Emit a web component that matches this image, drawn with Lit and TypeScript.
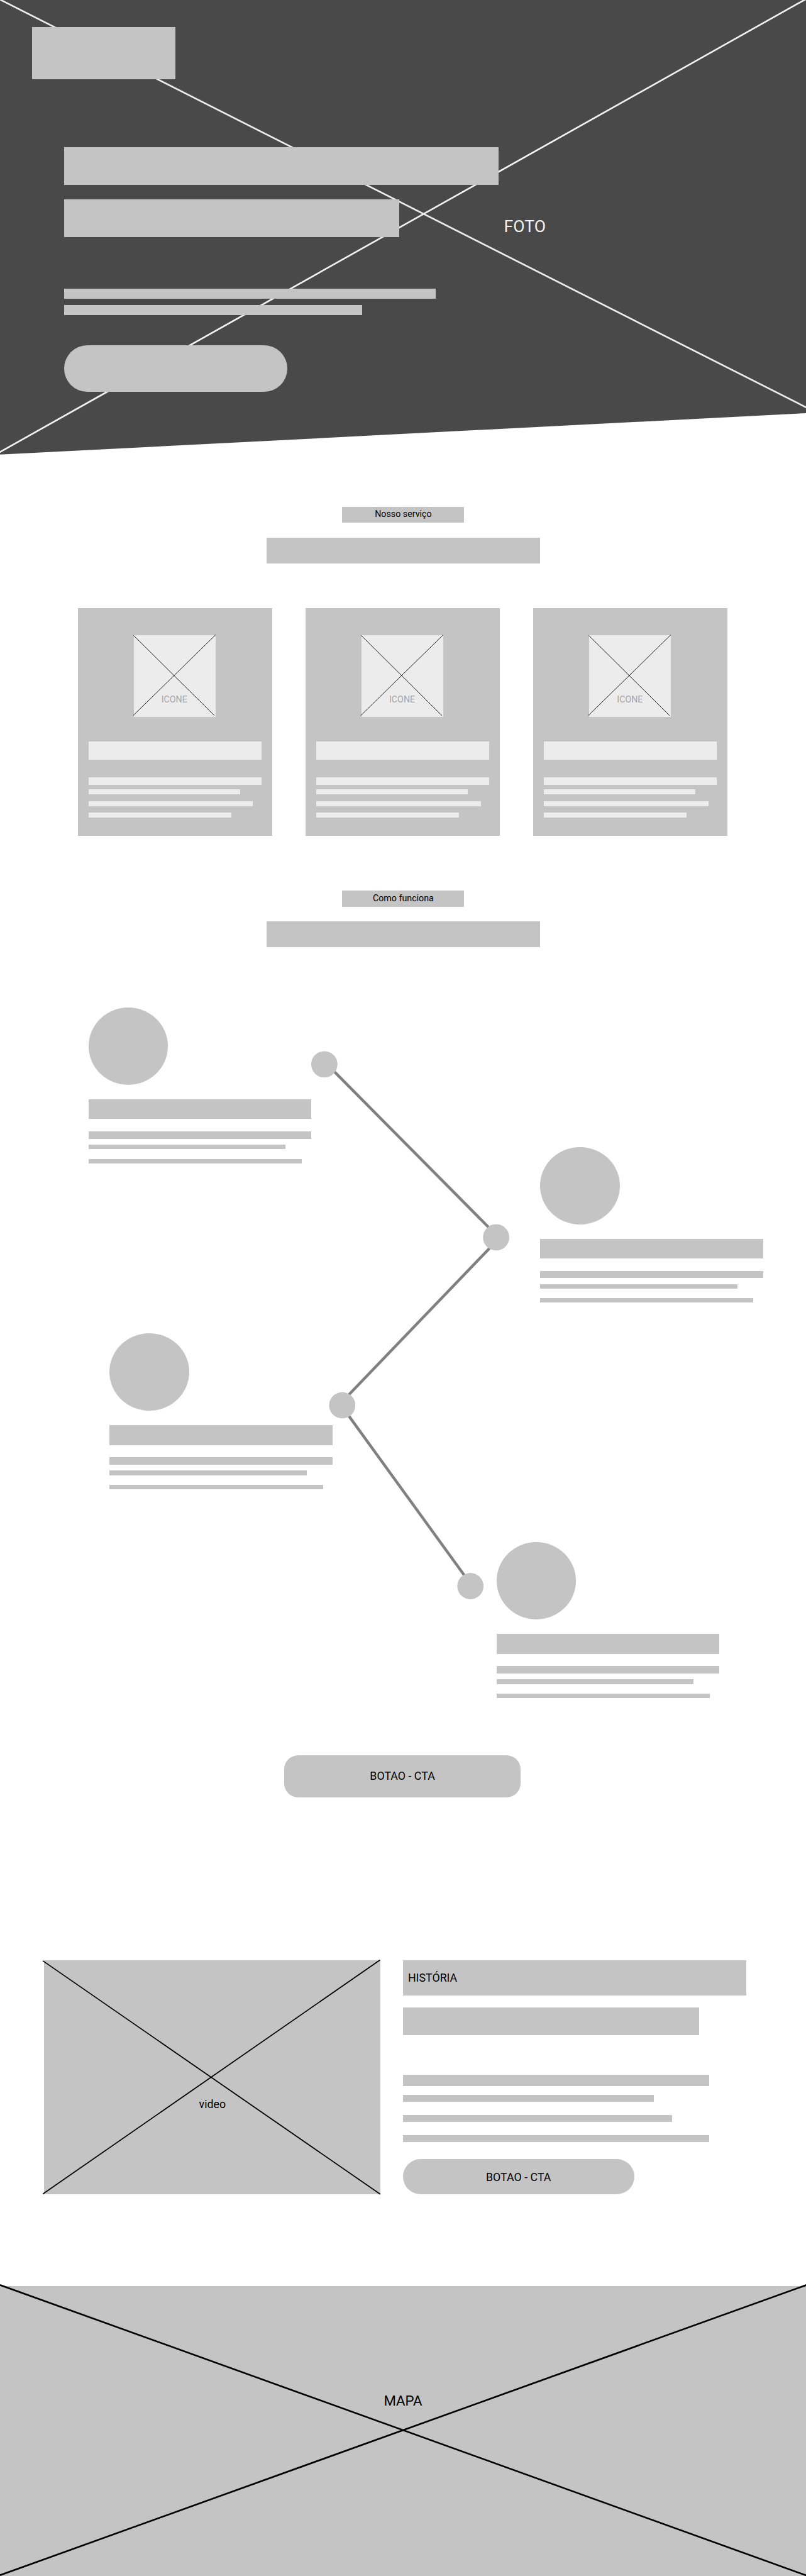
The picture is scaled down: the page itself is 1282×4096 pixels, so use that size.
import { LitElement, html, css, svg } from "lit";
import { customElement, property } from "lit/decorators.js";

interface Bar {
  w: number;
  h: number;
  gap: number;
}

/* Stack of placeholder bars; gap is the space above each bar. */
const bars = (items: Bar[]) =>
  items.map(
    (b) => html`<div class="bar" style="width:${b.w}px;height:${b.h}px;margin-top:${b.gap}px"></div>`
  );

const cross = (lines: number[][]) =>
  lines.map(([x1, y1, x2, y2]) => svg`<line x1=${x1} y1=${y1} x2=${x2} y2=${y2}></line>`);

const barStyles = css`
  .bar {
    background: var(--bar, #c4c4c4);
    flex: none;
  }
`;

@customElement("service-card")
export class ServiceCard extends LitElement {
  static styles = [
    barStyles,
    css`
      :host {
        --bar: #ececec;
        display: block;
        box-sizing: border-box;
        width: 347px;
        height: 407px;
        padding: 49px 19px 0;
        background: #c4c4c4;
      }
      .icon {
        position: relative;
        display: flex;
        align-items: flex-end;
        justify-content: center;
        box-sizing: border-box;
        width: 146px;
        height: 146px;
        margin: 0 auto 43px 81px;
        padding: 0 1px 22px 0;
        background: #ececec;
        color: #a6a6a6;
        font-size: 16px;
        line-height: 19px;
      }
      .icon svg {
        position: absolute;
        left: 0;
        top: 0;
        overflow: visible;
        stroke: #000;
        stroke-width: 1;
      }
    `,
  ];

  render() {
    return html`
      <div class="icon">
        <svg width="146" height="146" viewBox="0 0 146 146">
          ${cross([
            [-0.6, 0.4, 143.8, 143.6],
            [-1.4, 143.6, 146, -0.6],
          ])}
        </svg>
        <span>ICONE</span>
      </div>
      ${bars([
        { w: 309, h: 33, gap: 0 },
        { w: 309, h: 13, gap: 32 },
        { w: 271, h: 9, gap: 8 },
        { w: 294, h: 9, gap: 12 },
        { w: 255, h: 8, gap: 12 },
      ])}
    `;
  }
}

@customElement("step-item")
export class StepItem extends LitElement {
  static styles = [
    barStyles,
    css`
      :host {
        display: block;
        width: 398px;
        height: 278px;
      }
      .disc {
        width: 142px;
        height: 138px;
        border-radius: 50%;
        background: #c4c4c4;
      }
    `,
  ];

  render() {
    return html`
      <div class="disc"></div>
      ${bars([
        { w: 398, h: 35, gap: 26 },
        { w: 398, h: 13, gap: 22 },
        { w: 352, h: 8, gap: 11 },
        { w: 381, h: 8, gap: 17 },
      ])}
    `;
  }
}

@customElement("section-heading")
export class SectionHeading extends LitElement {
  @property() label = "";

  static styles = css`
    :host {
      display: flex;
      flex-direction: column;
      align-items: center;
      gap: 26px;
      height: 101px;
      padding-left: 0.8px;
    }
    .label {
      width: 218px;
      height: 29px;
      background: #c4c4c4;
      color: #000;
      font-size: 16px;
      line-height: var(--label-line, 25px);
      text-align: center;
    }
    .title {
      width: 489px;
      height: 46px;
      background: #c4c4c4;
    }
  `;

  render() {
    return html`<div class="label">${this.label}</div>
      <div class="title"></div>`;
  }
}

@customElement("app-root")
export class AppRoot extends LitElement {
  static styles = [
    barStyles,
    css`
      :host {
        display: block;
        overflow: hidden;
        background: #fff;
        font-family: Roboto, "Liberation Sans", sans-serif;
        color: #000;
      }
      .page {
        zoom: 0.8902;
        display: flex;
        flex-direction: column;
        width: 1440.2px;
      }
      svg {
        display: block;
      }
      .hero {
        position: relative;
        box-sizing: border-box;
        height: 812px;
        padding: 48px 0 0 57px;
      }
      .backdrop {
        position: absolute;
        left: 0;
        top: 0;
      }
      .logo {
        position: relative;
        width: 256px;
        height: 93px;
        background: #c4c4c4;
      }
      .pitch {
        position: relative;
        padding-left: 58px;
        margin-top: 122px;
      }
      .pill {
        width: 398px;
        height: 83px;
        margin-top: 54px;
        border-radius: 42px;
        background: #c4c4c4;
      }
      .photo-label {
        position: absolute;
        left: 900.3px;
        top: 388px;
        font-size: 30px;
        line-height: 34px;
        color: #f2f2f2;
      }
      .services {
        padding-top: 93px;
      }
      .cards {
        display: flex;
        gap: 60px;
        padding: 80px 0 0 139px;
      }
      .how {
        --label-line: 29px;
        padding-top: 98px;
      }
      .steps {
        position: relative;
        display: flex;
        justify-content: space-between;
        height: 1233px;
        margin-top: 108px;
        padding: 0 77px 0 158px;
      }
      .steps .path {
        position: absolute;
        left: 0;
        top: 0;
      }
      .col {
        display: flex;
        flex-direction: column;
      }
      .left {
        gap: 304px;
      }
      .left .second {
        margin-left: 38px;
      }
      .right {
        align-items: flex-end;
        gap: 428px;
        padding-top: 249px;
      }
      .right .second {
        margin-right: 78px;
      }
      .button {
        display: flex;
        align-items: center;
        justify-content: center;
        box-sizing: border-box;
        background: #c4c4c4;
        font-size: 20px;
        line-height: 24px;
      }
      .main-cta {
        width: 422px;
        height: 76px;
        margin: 102px 0 0 508px;
        border-radius: 25px;
        padding-bottom: 2px;
      }
      .about {
        display: flex;
        gap: 40px;
        margin-top: 290px;
        padding-left: 79px;
      }
      .video {
        position: relative;
        box-sizing: border-box;
        width: 601px;
        height: 419px;
        padding-top: 246px;
        background: #c4c4c4;
        font-size: 20px;
        line-height: 24px;
        text-align: center;
      }
      .video svg {
        position: absolute;
        left: 0;
        top: 0;
        overflow: visible;
        stroke: #000;
        stroke-width: 2;
      }
      .history {
        box-sizing: border-box;
        width: 614px;
        height: 63px;
        padding-left: 9px;
        background: #c4c4c4;
        font-size: 20px;
        line-height: 62px;
      }
      .about-cta {
        width: 413px;
        height: 63px;
        margin-top: 31px;
        border-radius: 32px;
      }
      .map {
        position: relative;
        box-sizing: border-box;
        height: 517.4px;
        margin-top: 164px;
        padding-top: 189.5px;
        background: #c4c4c4;
        font-size: 25px;
        line-height: 30px;
        text-align: center;
      }
      .map svg {
        position: absolute;
        left: 0;
        top: 0;
        overflow: visible;
        stroke: #000;
        stroke-width: 3;
      }
    `,
  ];

  render() {
    return html`
      <main class="page">
        <section class="hero">
          <svg class="backdrop" width="1441" height="813" viewBox="0 0 1441 813">
            <polygon points="0,0 1441,0 1441,738 0,812" fill="#494949"></polygon>
            <line x1="0" y1="-0.8" x2="1441" y2="728" stroke="#ececec" stroke-width="3"></line>
            <line x1="-2" y1="808.5" x2="1441" y2="-2.2" stroke="#f2f2f2" stroke-width="3"></line>
          </svg>
          <div class="logo"></div>
          <div class="pitch">
            ${bars([
              { w: 776, h: 67, gap: 0 },
              { w: 598, h: 67, gap: 26 },
              { w: 663, h: 18, gap: 93 },
              { w: 532, h: 18, gap: 11 },
            ])}
            <div class="pill"></div>
          </div>
          <span class="photo-label">FOTO</span>
        </section>

        <section class="services">
          <section-heading label="Nosso serviço"></section-heading>
          <div class="cards">
            <service-card></service-card>
            <service-card></service-card>
            <service-card></service-card>
          </div>
        </section>

        <section class="how">
          <section-heading label="Como funciona"></section-heading>
          <div class="steps">
            <svg class="path" width="1440" height="1233" viewBox="0 1800 1440 1233">
              <g stroke="#808080" stroke-width="5">
                ${cross([
                  [590, 1907.2, 875, 2194.6],
                  [880, 2224.5, 620, 2495],
                  [620, 2525, 832, 2817.5],
                ])}
              </g>
              <g fill="#c4c4c4">
                <circle cx="579.5" cy="1901.5" r="23.5"></circle>
                <circle cx="886.5" cy="2210.5" r="23.5"></circle>
                <circle cx="611.5" cy="2510.5" r="23.5"></circle>
                <circle cx="840.5" cy="2833.5" r="23.5"></circle>
              </g>
            </svg>
            <div class="col left">
              <step-item></step-item>
              <step-item class="second"></step-item>
            </div>
            <div class="col right">
              <step-item></step-item>
              <step-item class="second"></step-item>
            </div>
          </div>
          <div class="button main-cta">BOTAO - CTA</div>
        </section>

        <section class="about">
          <div class="video">
            <svg width="601" height="419" viewBox="0 0 601 419">
              ${cross([
                [-2, 1, 601, 418],
                [-2, 417.4, 600.4, -0.6],
              ])}
            </svg>
            video
          </div>
          <div>
            <div class="history">HISTÓRIA</div>
            ${bars([
              { w: 529, h: 49, gap: 22 },
              { w: 547, h: 20, gap: 71 },
              { w: 448, h: 12, gap: 16 },
              { w: 481, h: 12, gap: 24 },
              { w: 547, h: 12, gap: 24 },
            ])}
            <div class="button about-cta">BOTAO - CTA</div>
          </div>
        </section>

        <section class="map">
          <svg width="1440" height="517" viewBox="0 0 1440 517">
            ${cross([
              [0, -2, 1441, 517],
              [1441, -2, 0, 516.5],
            ])}
          </svg>
          MAPA
        </section>
      </main>
    `;
  }
}
